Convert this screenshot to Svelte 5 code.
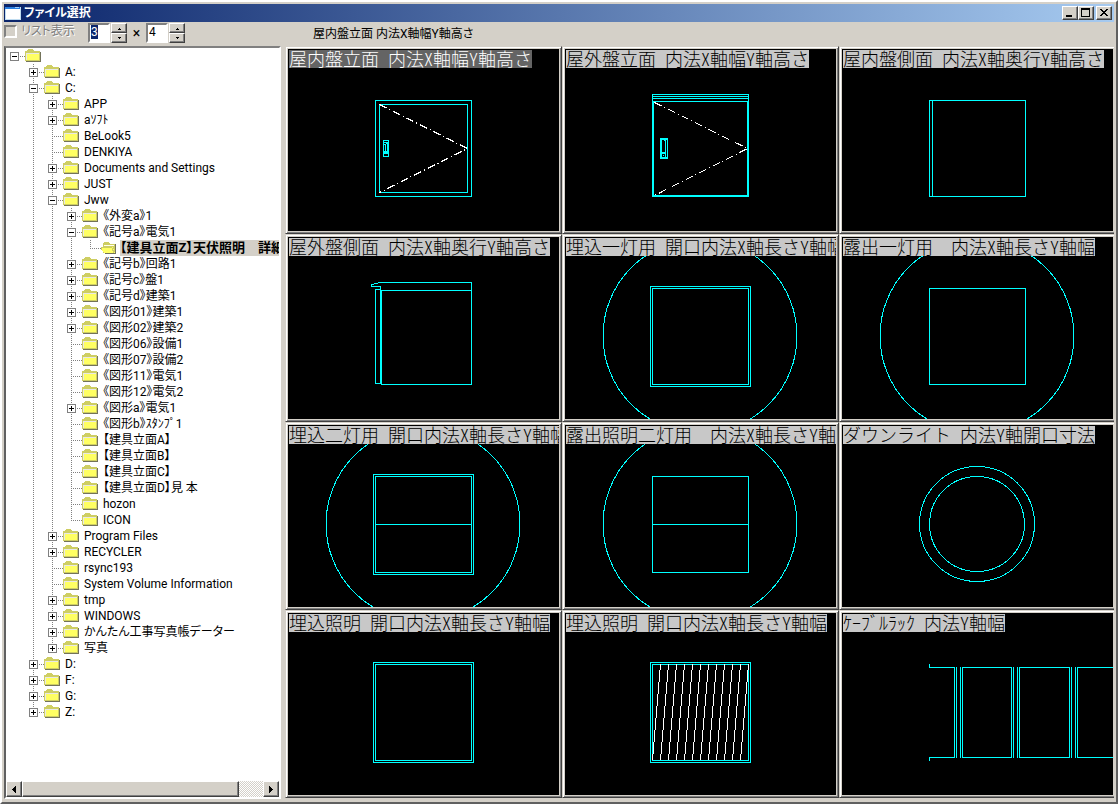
<script>
  import { onMount } from 'svelte';

  // [depth, name, toggle]: "+" collapsed, "-" expanded, "" no children
  const nodes = [
    [0, '', '-'],
    [1, 'A:', '+'],
    [1, 'C:', '-'],
    [2, 'APP', '+'],
    [2, 'aｿﾌﾄ', '+'],
    [2, 'BeLook5', ''],
    [2, 'DENKIYA', ''],
    [2, 'Documents and Settings', '+'],
    [2, 'JUST', '+'],
    [2, 'Jww', '-'],
    [3, '《外変a》1', '+'],
    [3, '《記号a》電気1', '-'],
    [4, '【建具立面Z】天伏照明　詳細', ''],
    [3, '《記号b》回路1', '+'],
    [3, '《記号c》盤1', '+'],
    [3, '《記号d》建築1', '+'],
    [3, '《図形01》建築1', '+'],
    [3, '《図形02》建築2', '+'],
    [3, '《図形06》設備1', ''],
    [3, '《図形07》設備2', ''],
    [3, '《図形11》電気1', ''],
    [3, '《図形12》電気2', ''],
    [3, '《図形a》電気1', '+'],
    [3, '《図形b》ｽﾀﾝﾌﾟ1', ''],
    [3, '【建具立面A】', ''],
    [3, '【建具立面B】', ''],
    [3, '【建具立面C】', ''],
    [3, '【建具立面D】見 本', ''],
    [3, 'hozon', ''],
    [3, 'ICON', ''],
    [2, 'Program Files', '+'],
    [2, 'RECYCLER', '+'],
    [2, 'rsync193', ''],
    [2, 'System Volume Information', ''],
    [2, 'tmp', '+'],
    [2, 'WINDOWS', '+'],
    [2, 'かんたん工事写真帳データー', '+'],
    [2, '写真', '+'],
    [1, 'D:', '+'],
    [1, 'F:', '+'],
    [1, 'G:', '+'],
    [1, 'Z:', '+']
  ];

  function hasLaterSibling(index, depth) {
    for (let i = index + 1; i < nodes.length; i++) {
      if (nodes[i][0] < depth) return false;
      if (nodes[i][0] === depth) return true;
    }
    return false;
  }

  const rows = nodes.map(([depth, name, toggle], i) => ({
    depth,
    name,
    toggle,
    selected: depth === 4,
    guides: Array.from({ length: depth }, (_, k) => hasLaterSibling(i, k)),
    more: hasLaterSibling(i, depth)
  }));

  const panels = [
    { title: '屋内盤立面 内法X軸幅Y軸高さ', kind: 'door-in' },
    { title: '屋外盤立面 内法X軸幅Y軸高さ', kind: 'door-out' },
    { title: '屋内盤側面 内法X軸奥行Y軸高さ', kind: 'side-in' },
    { title: '屋外盤側面 内法X軸奥行Y軸高さ', kind: 'side-out' },
    { title: '埋込一灯用 開口内法X軸長さY軸幅', circle: true, square: true, frame: true },
    { title: '露出一灯用  内法X軸長さY軸幅', circle: true, square: true },
    { title: '埋込二灯用 開口内法X軸長さY軸幅', circle: true, square: true, frame: true, split: true },
    { title: '露出照明二灯用  内法X軸長さY軸幅', circle: true, square: true, split: true },
    { title: 'ダウンライト 内法Y軸開口寸法', kind: 'downlight' },
    { title: '埋込照明 開口内法X軸長さY軸幅', square: true, frame: true },
    { title: '埋込照明 開口内法X軸長さY軸幅', square: true, frame: true, hatch: true },
    { title: 'ｹｰﾌﾞﾙﾗｯｸ 内法Y軸幅', kind: 'rack' }
  ];

  const hatches = Array.from({ length: 12 }, (_, i) => 95.5 + i * 8);

  let current = $state(0);
  let columns = $state('3');
  let lines = $state('4');
  let columnsInput;

  onMount(() => {
    columnsInput.focus();
    columnsInput.select();
  });
</script>

{#snippet spinner(name)}
  <span class="spin">
    <button aria-label={name + ' +'}><svg width="5" height="3" viewBox="0 0 5 3"><path d="M2 1h1v1h1v1H1V2h1z" /></svg></button>
    <button aria-label={name + ' -'}><svg width="5" height="3" viewBox="0 0 5 3"><path d="M1 0h3v1H3v1H2V1H1z" /></svg></button>
  </span>
{/snippet}

<div class="window">
  <header class="titlebar">
    <svg class="app-icon" width="16" height="13" viewBox="0 0 16 13">
      <rect width="16" height="13" fill="#c0dcf0" />
      <rect width="15" height="2" fill="#2a7fe0" />
      <rect x="10" width="4" height="1" fill="#9fd0ff" />
      <rect x="1" y="2" width="14" height="10" fill="#fff" />
    </svg>
    <h1>ファイル選択</h1>
    <button class="tool" aria-label="最小化"><svg width="12" height="10" viewBox="0 0 12 10"><path d="M2 7h6v2H2z" /></svg></button>
    <button class="tool" aria-label="最大化"><svg width="12" height="10" viewBox="0 0 12 10"><path d="M1 0h9v9H1zM2 2v6h7V2z" fill-rule="evenodd" /></svg></button>
    <button class="tool close" aria-label="閉じる"><svg width="12" height="10" viewBox="0 0 12 10"><path d="M2 1h2v1h1v1h2V2h1V1h2v1H9v1H8v1H7v1h1v1h1v1h1v1H8V7H7V6H5v1H4v1H2V7h1V6h1V5h1V4H4V3H3V2H2z" /></svg></button>
  </header>

  <div class="toolbar">
    <label class="list"><input type="checkbox" disabled /><span>リスト表示</span></label>
    <div class="size">
      <input class="num" aria-label="列数" bind:value={columns} bind:this={columnsInput} />
      {@render spinner('列数')}
      <span class="times">×</span>
      <input class="num" aria-label="行数" bind:value={lines} />
      {@render spinner('行数')}
    </div>
    <output>{panels[current].title}</output>
  </div>

  <main>
    <section class="tree">
      <ul>
        {#each rows as row}
          <li>
            {#each row.guides as guide}
              <svg class="cell" width="19" height="16" viewBox="0 0 19 16">
                {#if guide}<path class="dots" d="M8.5 0V16" />{/if}
              </svg>
            {/each}
            {#if row.toggle}
              <button class="cell" aria-label={row.toggle === '+' ? '展開' : '折りたたみ'}>
                <svg width="19" height="16" viewBox="0 0 19 16">
                  {#if row.depth > 0}<path class="dots" d="M8.5 0V4" />{/if}
                  {#if row.more}<path class="dots" d="M8.5 14V16" />{/if}
                  <path class="dots" d="M14 8.5H19" />
                  <rect x="4.5" y="4.5" width="8" height="8" fill="#fff" stroke="#808080" />
                  <path d="M6 8.5H11" stroke="#000" />
                  {#if row.toggle === '+'}<path d="M8.5 6V11" stroke="#000" />{/if}
                </svg>
              </button>
            {:else}
              <svg class="cell" width="19" height="16" viewBox="0 0 19 16">
                <path class="dots" d={row.more ? 'M8.5 0V16' : 'M8.5 0V9'} />
                <path class="dots" d="M8 8.5H19" />
              </svg>
            {/if}
            <svg class="folder" width="16" height="16" viewBox="0 0 16 16">
              {#if row.selected}
                <path d="M2 3h1V2h5v1h1v1h5v9H2z" fill="#cece63" />
                <path d="M3 5h10v1H3z" fill="#fffff0" />
                <path d="M1 7h10l1 1 2 5v1H4L3 13 0 8z" fill="#ffff63" />
                <path d="M14 4h1v10H4v-1h10z" fill="#73735a" />
                <path d="M0 7h11v1h1v2h1v3h-1v-2h-1V8H1v2H0z" fill="#cece63" />
              {:else}
                <path d="M1 3h1V2h1V1h5v1h1v1h6v10H0V3z" fill="#cece63" />
                <path d="M1 5h13v1H2v6H1z" fill="#e8e8e8" />
                <path d="M2 6h12v6H2z" fill="#ffff63" />
                <path d="M15 4h1v10H1v-1h14z" fill="#73735a" />
              {/if}
            </svg>
            <a href="#tree" class:selected={row.selected}>{row.name}</a>
          </li>
        {/each}
      </ul>
      <div class="scroll">
        <button class="arrow" aria-label="左"><svg width="4" height="7" viewBox="0 0 4 7"><path d="M3 0h1v7H3V6H2V5H1V4H0V3h1V2h1V1h1z" /></svg></button>
        <div class="track"><div class="thumb"></div></div>
        <button class="arrow" aria-label="右"><svg width="4" height="7" viewBox="0 0 4 7"><path d="M0 0h1v1h1v1h1v1h1v1H3v1H2v1H1v1H0z" /></svg></button>
      </div>
    </section>

    <section class="grid">
      {#each panels as p, i}
        <button class="panel" class:current={i === current} onclick={() => (current = i)}>
          <svg class="drawing" viewBox="0 0 271 182">
            {#if p.circle}<circle cx="135" cy="99" r="97" />{/if}
            {#if p.frame}<rect x="85.5" y="49.5" width="100" height="100" />{/if}
            {#if p.square}<rect x="87.5" y="51.5" width="96" height="96" />{/if}
            {#if p.split}<path d="M87 99.5H184" />{/if}
            {#if p.hatch}
              {#each hatches as x}<path class="white" d="M{x} 51L{x - 8} 147" />{/each}
            {/if}
            {#if p.kind === 'door-in'}
              <rect x="87.5" y="51.5" width="96" height="96" />
              <rect x="91.5" y="55.5" width="88" height="88" />
              <path class="white dash" d="M91.5 55.5L179.5 99.5L91.5 143.5" />
              <path class="solid" fill-rule="evenodd" d="M95 91h6v17h-6zM96 92v1h4v-1zM96 94v1h2v-1zM98 95v7h1v-7zM96 96v6h1v-6zM96 105v2h4v-2z" />
            {:else if p.kind === 'door-out'}
              <path class="solid" fill-rule="evenodd" d="M87 45h97v103H87zM88 46v1h95v-1zM88 48v1h95v-1zM88 50v2h95v-2zM89 53v93h93v-93z" />
              <path class="white dash" d="M89.5 53.5L182.5 99.5L89.5 146.5" />
              <path class="solid" fill-rule="evenodd" d="M95 89h8v21h-8zM97 91v12h3v-11h-1v-1zM101 91v17h1v-17zM97 105v3h3v-3z" />
              <path class="solid" d="M98 106h1v1h-1z" />
            {:else if p.kind === 'side-in'}
              <rect x="87.5" y="51.5" width="96" height="96" />
              <path d="M90.5 51V148" />
            {:else if p.kind === 'side-out'}
              <path d="M90 45.5H183.5V147.5H93.5V53.5H184M92.5 147V49.5H83.5V47.5H86M86 46.5H90M92 52.5H87.5V146.5H93" />
            {:else if p.kind === 'downlight'}
              <circle cx="135" cy="99" r="57.5" />
              <circle cx="135" cy="99" r="47.5" />
            {:else if p.kind === 'rack'}
              <path d="M87.5 51V54.5H112.5V144.5H87.5V148M114.5 54V145M118.5 54V145M120.5 54.5H169.5V144.5H120.5zM171.5 54V145M175.5 54V145M177.5 54.5H227.5V144.5H177.5zM229.5 54V145M233.5 54V145M271 54.5H235.5V144.5H271" />
            {/if}
          </svg>
          <span class="caption">{p.title}</span>
        </button>
      {/each}
    </section>
  </main>
</div>

<style>
  :global(body) {
    margin: 0;
    background: #d4d0c8;
  }
  .window {
    --face: #d4d0c8;
    box-sizing: border-box;
    height: 100vh;
    min-height: 780px;
    display: flex;
    flex-direction: column;
    padding: 2px;
    border: 2px solid;
    border-color: #fff #606060 #606060 #fff;
    background: var(--face);
    font: 12px/16px Roboto, 'Noto Sans CJK JP', sans-serif;
    font-feature-settings: 'palt';
    color: #000;
    overflow: hidden;
  }
  button {
    display: flex;
    align-items: center;
    justify-content: center;
    margin: 0;
    padding: 0;
    box-sizing: border-box;
    border: 0;
    font: inherit;
    color: inherit;
    background: var(--face);
  }
  svg {
    display: block;
    flex: none;
    shape-rendering: crispEdges;
  }
  .tool,
  .spin button,
  .arrow,
  .thumb {
    border: 1px solid;
    border-color: #fff #404040 #404040 #fff;
    box-shadow: inset -1px -1px #808080;
  }

  .titlebar {
    display: flex;
    align-items: center;
    height: 18px;
    padding: 0 2px 0 1px;
    background: linear-gradient(90deg, #0a246a, #a6caf0);
    color: #fff;
  }
  h1 {
    flex: 1;
    margin: 0 0 0 3px;
    font-size: 12px;
    line-height: 18px;
    font-weight: 700;
  }
  .tool {
    width: 16px;
    height: 14px;
    color: #000;
  }
  .close {
    margin-left: 2px;
  }

  .toolbar {
    display: flex;
    align-items: flex-start;
    height: 24px;
  }
  .list {
    display: flex;
    align-items: center;
    gap: 4px;
    width: 84px;
    margin-top: 1px;
    color: #808080;
    text-shadow: 1px 1px #fff;
  }
  .list span {
    white-space: nowrap;
  }
  .list input {
    appearance: none;
    box-sizing: border-box;
    width: 13px;
    height: 13px;
    margin: 0;
    border: 2px solid;
    border-color: #808080 #fff #fff #808080;
    background: var(--face);
  }
  .size {
    display: flex;
    gap: 1px;
    margin-top: 1px;
  }
  .num {
    box-sizing: border-box;
    width: 22px;
    height: 20px;
    margin: 0;
    padding: 0 0 2px 1px;
    border: 2px solid;
    border-color: #808080 #fff #fff #808080;
    outline: 0;
    background: #fff;
    font: inherit;
  }
  .num::selection {
    background: #0a246afe;
    color: #fff;
  }
  .spin {
    display: flex;
    flex-direction: column;
  }
  .spin button {
    width: 16px;
    height: 10px;
  }
  .times {
    width: 17px;
    text-align: center;
    font-size: 14px;
    line-height: 20px;
  }
  output {
    margin: 4px 0 0 128px;
    white-space: pre;
  }

  main {
    flex: 1;
    min-height: 0;
    display: flex;
    gap: 4px;
    padding-bottom: 2px;
  }
  .tree {
    flex: none;
    box-sizing: border-box;
    width: 277px;
    margin-bottom: -1px;
    display: flex;
    flex-direction: column;
    border: 2px solid;
    border-color: #808080 #fff #fff #606060;
    background: #fff;
  }
  ul {
    flex: 1;
    min-height: 0;
    margin: 0;
    padding: 0;
    list-style: none;
    overflow: hidden;
  }
  li {
    display: flex;
    height: 16px;
    white-space: nowrap;
  }
  .cell {
    flex: none;
    width: 19px;
    height: 16px;
    background: none;
  }
  .dots {
    stroke: #808080;
    stroke-dasharray: 1 1;
  }
  li a {
    margin-left: 3px;
    padding: 0 2px;
    color: inherit;
    text-decoration: none;
  }
  li a.selected {
    flex: 1;
    padding: 0;
    background: var(--face);
    font-size: 13px;
    font-weight: 700;
  }
  .scroll {
    display: flex;
    height: 16px;
  }
  .arrow {
    width: 16px;
    height: 16px;
  }
  .track {
    flex: 1;
    background: repeating-conic-gradient(#fff 0 25%, #d4d0c8 0 50%) 0 0 / 2px 2px;
  }
  .thumb {
    box-sizing: border-box;
    width: 90%;
    height: 16px;
    background: var(--face);
  }

  .grid {
    flex: 1;
    min-width: 0;
    margin-right: -2px;
    display: grid;
    grid-template-columns: repeat(3, minmax(0, 1fr));
    grid-template-rows: repeat(4, minmax(0, 1fr));
    clip-path: inset(0 2px 0 0);
  }
  .panel {
    position: relative;
    padding: 1px;
    border: 1px solid;
    border-color: #d4d0c8 #404040 #404040 #d4d0c8;
    box-shadow: inset 1px 1px #fff, inset -1px -1px #808080;
  }
  .drawing {
    box-sizing: border-box;
    width: 100%;
    height: 100%;
    border: 1px solid #d4d0c8;
    background: #000;
    fill: none;
    stroke: #0ff;
  }
  .solid {
    fill: #0ff;
    stroke: none;
  }
  .white {
    stroke: #fff;
  }
  .dash {
    stroke-dasharray: 8 3 1 3;
  }
  .caption {
    position: absolute;
    top: 3px;
    left: 3px;
    max-width: calc(100% - 5px);
    height: 18px;
    overflow-x: clip;
    background: #c8c8c8;
    font: 300 18px/16px 'Noto Sans CJK JP', sans-serif;
    font-feature-settings: 'hwid';
    white-space: pre;
  }
  .current .caption {
    background: #646464;
    color: #fff;
  }
</style>
